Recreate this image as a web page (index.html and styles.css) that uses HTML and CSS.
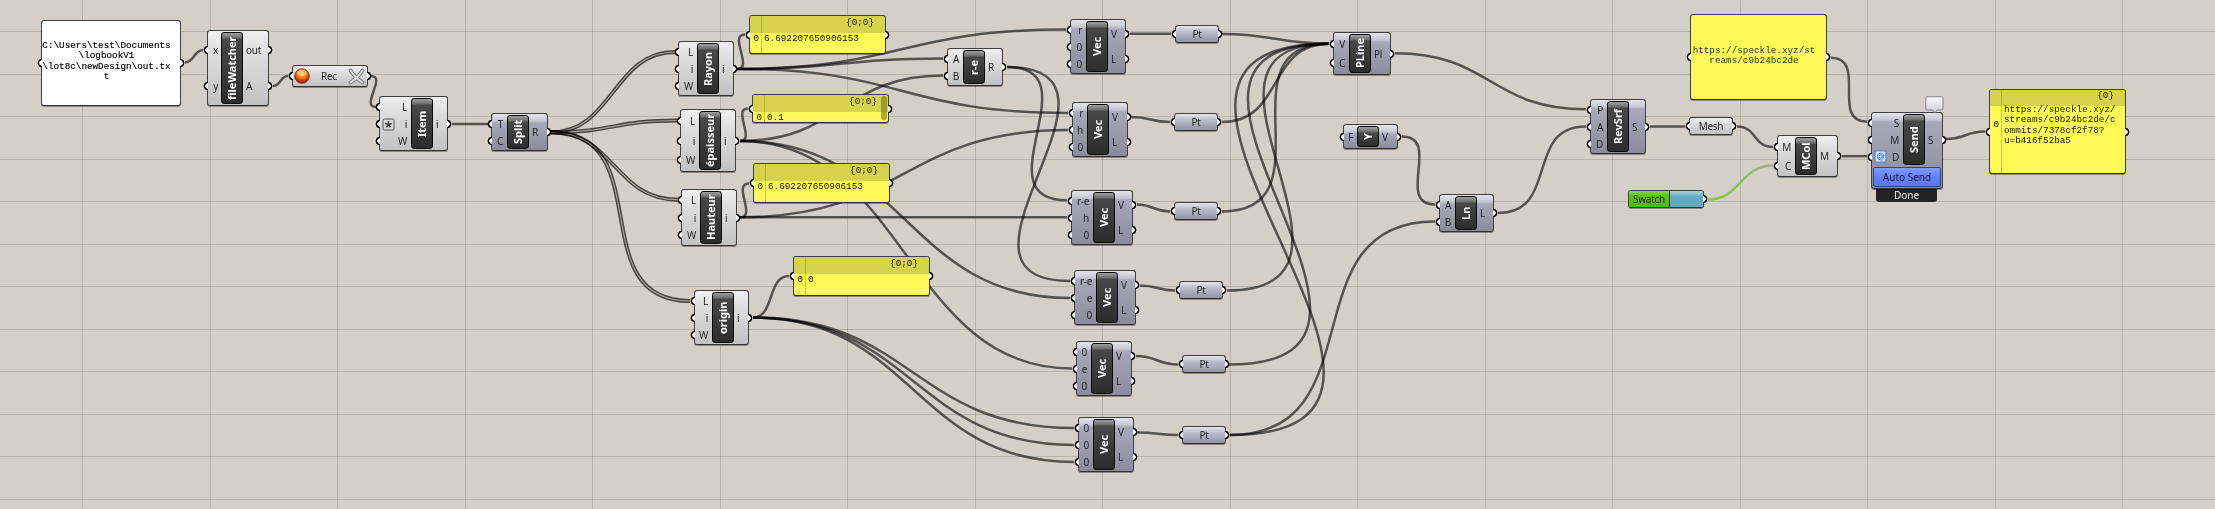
FILE: index.html
```html
<!DOCTYPE html>
<html lang="en">
<head>
<meta charset="utf-8">
<title>Definition canvas</title>
<link rel="stylesheet" href="styles.css">
</head>
<body>
<main class="canvas">
<svg class="wires" width="2215" height="509" viewBox="0 0 2215 509">
  <defs>
    <linearGradient id="green" x1="1708" x2="1773" y1="0" y2="0" gradientUnits="userSpaceOnUse">
      <stop offset="0" stop-color="#7fcb35"/><stop offset=".5" stop-color="#8cc255"/><stop offset="1" stop-color="#a3ad97"/>
    </linearGradient>
  </defs>
  <g class="grid">
    <path d="M82.5 0V509M210.5 0V509M337.5 0V509M465.5 0V509M592.5 0V509M720.5 0V509M847.5 0V509M975.5 0V509M1102.5 0V509M1230.5 0V509M1357.5 0V509M1485.5 0V509M1612.5 0V509M1740.5 0V509M1867.5 0V509M1995.5 0V509M2122.5 0V509"/>
    <path d="M0 31.5H2215M0 74.5H2215M0 116.5H2215M0 159.5H2215M0 201.5H2215M0 244.5H2215M0 286.5H2215M0 329.5H2215M0 371.5H2215M0 414.5H2215M0 456.5H2215M0 499.5H2215"/>
  </g>
  <g class="wire">
    <path d="M185 62.5C194 62.5 194 50 203 50"/>
    <path d="M273 86C281 86 280 76 288 76"/>
    <path d="M371 76C387 76 360 107 376 107"/>
    <path d="M452 124H488"/>
    <path d="M737 69C754 69 728 34.500 745 34.500"/>
    <path d="M737 69C901 69 902 29.500 1066 29.500"/>
    <path d="M737 69C840 69 840 58.500 943 58.500"/>
    <path d="M737 69C902 69 903 113 1068 113"/>
    <path d="M740 141C756 141 732 108.500 748 108.500"/>
    <path d="M740 141C841 141 842 75.500 943 75.500"/>
    <path d="M740 141C905 141 905 298 1070 298"/>
    <path d="M740 141C906 141 906 368.500 1072 368.500"/>
    <path d="M740 217.300C757 217.300 732 183.500 749 183.500"/>
    <path d="M740 217.300H1067"/>
    <path d="M740 217.300C904 217.300 904 130 1068 130"/>
    <path d="M753 317.500C775 317.500 767 276 789 276"/>
    <path d="M753 317.500C913 317.500 914 428 1074 428"/>
    <path d="M753 317.500C913 317.500 914 445 1074 445"/>
    <path d="M753 317.500C913 317.500 914 462 1074 462"/>
    <path d="M1007 67C1095 67 979 200.300 1067 200.300"/>
    <path d="M1007 67C1155 67 922 281 1070 281"/>
    <path d="M1130 33.700H1171"/>
    <path d="M1131 117C1151 117 1150 122 1170 122"/>
    <path d="M1137 204.500C1153 204.500 1154 211.500 1170 211.500"/>
    <path d="M1140 285.500C1157 285.500 1158 290.500 1175 290.500"/>
    <path d="M1136 356C1157 356 1157 364.500 1178 364.500"/>
    <path d="M1137 432.500C1158 432.500 1158 435 1178 435"/>
    <path d="M1222 34C1275 34 1276 43.700 1329 43.700"/>
    <path d="M1222 122C1284 122 1267 43.700 1329 43.700"/>
    <path d="M1222 211.500C1333 211.500 1218 43.700 1329 43.700"/>
    <path d="M1227 290.500C1399 290.500 1157 43.700 1329 43.700"/>
    <path d="M1229 364.500C1461 364.500 1097 43.700 1329 43.700"/>
    <path d="M1230 435C1508 435 1051 43.700 1329 43.700"/>
    <path d="M1230 435C1378 435 1287 221.500 1435 221.500"/>
    <path d="M1395 53.200C1491 53.200 1490 109.300 1586 109.300"/>
    <path d="M1402 136.500C1442 136.500 1395 204.500 1435 204.500"/>
    <path d="M1498 213C1560 213 1524 126.500 1586 126.500"/>
    <path d="M1650 126.500H1685"/>
    <path d="M1737 126.500C1757 126.500 1753 147 1773 147"/>
    <path d="M1842 156.200H1867"/>
    <path d="M1831 57.700C1868 57.700 1830 121.700 1867 121.700"/>
    <path d="M1946 139C1966 139 1965 131.500 1985 131.500"/>
    <path class="wire-green" d="M1708 199.500C1741 199.500 1740 165.500 1773 165.500"/>
  </g>
  <g class="wire-list">
    <g><path d="M551 132.300C613 132.300 613 52 675 52"/><path class="core" d="M551 132.300C613 132.300 613 52 675 52"/></g>
    <g><path d="M551 132.300C614 132.300 614 120.500 677 120.500"/><path class="core" d="M551 132.300C614 132.300 614 120.500 677 120.500"/></g>
    <g><path d="M551 132.300C615 132.300 614 199.700 678 199.700"/><path class="core" d="M551 132.300C615 132.300 614 199.700 678 199.700"/></g>
    <g><path d="M551 132.300C660 132.300 581 301 690 301"/><path class="core" d="M551 132.300C660 132.300 581 301 690 301"/></g>
  </g>
</svg>

<section class="panel white centered" id="path-panel"><i class="grip l"></i><i class="grip r"></i><p>C:\Users\test\Documents<br>\logbookV1<br>\lot8c\newDesign\out.tx<br>t</p></section>

<section class="node" id="watcher">
  <div class="ins"><span>x</span><span>y</span></div><b>fileWatcher</b><div class="outs"><span>out</span><span>A</span></div>
</section>

<section class="pill" id="rec"><i class="grip l"></i><i class="grip r"></i>
  <svg width="16" height="16" viewBox="0 0 16 16"><defs><radialGradient id="ball" cx=".5" cy=".3" r=".7"><stop offset="0" stop-color="#ffcf58"/><stop offset=".45" stop-color="#ec8620"/><stop offset=".8" stop-color="#c03408"/><stop offset="1" stop-color="#8c1400"/></radialGradient></defs><circle cx="8" cy="8" r="7.300" fill="url(#ball)" stroke="#8d1c0a" stroke-width=".8"/><ellipse cx="8" cy="5" rx="5" ry="3" fill="#fff" opacity=".25"/></svg>
  <span>Rec</span>
  <svg width="17" height="17" viewBox="0 0 17 17" fill="none" stroke-linecap="round"><path d="M2.500 2.500Q7 9.500 14.500 14.500M14.500 2.500Q10 9.500 2.500 14.500" stroke="#777" stroke-width="3.800"/><path d="M2.500 2.500Q7 9.500 14.500 14.500M14.500 2.500Q10 9.500 2.500 14.500" stroke="#dedede" stroke-width="2"/></svg>
</section>

<section class="node" id="item">
  <div class="ins"><span>L</span><span>i</span><span>W</span></div><b>Item</b><div class="outs"><span>i</span></div>
  <svg class="badge" width="13" height="13" viewBox="0 0 13 13" fill="none"><rect x="1" y="1" width="11" height="11" rx="1.500" fill="#d9d9d9" stroke="#555"/><path d="M6.500 6.500V3M6.500 6.500L3.200 5.500M6.500 6.500L9.800 5.500M6.500 6.500L4.500 9.400M6.500 6.500L8.500 9.400" stroke="#444" stroke-width="1.500"/></svg>
</section>
<section class="node violet" id="split"><div class="ins"><span>T</span><span>C</span></div><b>Split</b><div class="outs"><span>R</span></div></section>

<section class="node" id="rayon"><div class="ins"><span>L</span><span>i</span><span>W</span></div><b>Rayon</b><div class="outs"><span>i</span></div></section>
<section class="node" id="epaisseur"><div class="ins"><span>L</span><span>i</span><span>W</span></div><b>épaisseur</b><div class="outs"><span>i</span></div></section>
<section class="node" id="hauteur"><div class="ins"><span>L</span><span>i</span><span>W</span></div><b>Hauteur</b><div class="outs"><span>i</span></div></section>
<section class="node" id="origin"><div class="ins"><span>L</span><span>i</span><span>W</span></div><b>origin</b><div class="outs"><span>i</span></div></section>

<section class="panel" id="rayon-panel"><i class="grip l"></i><i class="grip r"></i><header>{0;0}</header><div class="row"><span>0</span><p>6.692207650906153</p></div></section>
<section class="panel" id="epaisseur-panel"><i class="grip l"></i><i class="grip r"></i><header>{0;0}</header><div class="row"><span>0</span><p>0.1</p></div><i class="scroll"></i></section>
<section class="panel" id="hauteur-panel"><i class="grip l"></i><i class="grip r"></i><header>{0;0}</header><div class="row"><span>0</span><p>6.692207650906153</p></div></section>
<section class="panel" id="origin-panel"><i class="grip l"></i><i class="grip r"></i><header>{0;0}</header><div class="row"><span>0</span><p>0</p></div></section>

<section class="node" id="minus"><div class="ins"><span>A</span><span>B</span></div><b>r-e</b><div class="outs"><span>R</span></div></section>

<section class="node violet" id="vec1"><div class="ins"><span>r</span><span>0</span><span>0</span></div><b>Vec</b><div class="outs"><span>V</span><span>L</span></div></section>
<section class="node violet" id="vec2"><div class="ins"><span>r</span><span>h</span><span>0</span></div><b>Vec</b><div class="outs"><span>V</span><span>L</span></div></section>
<section class="node violet" id="vec3"><div class="ins"><span>r-e</span><span>h</span><span>0</span></div><b>Vec</b><div class="outs"><span>V</span><span>L</span></div></section>
<section class="node violet" id="vec4"><div class="ins"><span>r-e</span><span>e</span><span>0</span></div><b>Vec</b><div class="outs"><span>V</span><span>L</span></div></section>
<section class="node violet" id="vec5"><div class="ins"><span>0</span><span>e</span><span>0</span></div><b>Vec</b><div class="outs"><span>V</span><span>L</span></div></section>
<section class="node violet" id="vec6"><div class="ins"><span>0</span><span>0</span><span>0</span></div><b>Vec</b><div class="outs"><span>V</span><span>L</span></div></section>

<section class="pill violet" id="pt1"><i class="grip l"></i><i class="grip r"></i><span>Pt</span></section>
<section class="pill violet" id="pt2"><i class="grip l"></i><i class="grip r"></i><span>Pt</span></section>
<section class="pill violet" id="pt3"><i class="grip l"></i><i class="grip r"></i><span>Pt</span></section>
<section class="pill violet" id="pt4"><i class="grip l"></i><i class="grip r"></i><span>Pt</span></section>
<section class="pill violet" id="pt5"><i class="grip l"></i><i class="grip r"></i><span>Pt</span></section>
<section class="pill violet" id="pt6"><i class="grip l"></i><i class="grip r"></i><span>Pt</span></section>

<section class="node violet" id="pline"><div class="ins"><span>V</span><span>C</span></div><b>PLine</b><div class="outs"><span>Pl</span></div></section>
<section class="node violet" id="unit-y"><div class="ins"><span>F</span></div><b>Y</b><div class="outs"><span>V</span></div></section>
<section class="node violet" id="line"><div class="ins"><span>A</span><span>B</span></div><b>Ln</b><div class="outs"><span>L</span></div></section>
<section class="node violet" id="revsrf"><div class="ins"><span>P</span><span>A</span><span>D</span></div><b>RevSrf</b><div class="outs"><span>S</span></div></section>
<section class="pill" id="mesh"><i class="grip l"></i><i class="grip r"></i><span>Mesh</span></section>
<section class="pill" id="swatch"><i class="grip r"></i><span class="name">Swatch</span><span class="color"></span></section>
<section class="node" id="mcol"><div class="ins"><span>M</span><span>C</span></div><b>MCol</b><div class="outs"><span>M</span></div></section>

<section class="panel centered" id="url-panel"><i class="grip l"></i><i class="grip r"></i><p>https://speckle.xyz/st<br>reams/c9b24bc2de</p></section>

<div class="done">Done</div>
<section class="node violet" id="send">
  <div class="ins"><span>S</span><span>M</span><span>D</span></div><b>Send</b><div class="outs"><span>S</span></div>
  <div class="button">Auto Send</div>
  <svg class="badge" width="13" height="13" viewBox="0 0 13 13" fill="none"><rect x="1" y="1" width="11" height="11" rx="1" fill="#d5e6fb" stroke="#3f86e8" stroke-width="1.200"/><path d="M8.200 4.500V7.500Q8.200 8.700 9.200 8.200Q10.200 7 9.600 5Q8.800 3 6.500 3Q3.300 3.300 3.300 6.500Q3.500 10 7 10H8.500M8.200 6.500A1.600 1.800 0 1 1 8.100 5.800" stroke="#3f86e8"/></svg>
  <svg class="bubble" width="19" height="18" viewBox="0 0 19 18"><defs><linearGradient id="bub" x2="0" y2="1"><stop offset="0" stop-color="#fafafc"/><stop offset="1" stop-color="#c9cbd8"/></linearGradient></defs><path d="M2 .8H16.500Q18 .8 18 2.300V12.500Q18 14 16.500 14H12L9.700 16.800L7.500 14H2Q.8 14 .8 12.500V2.300Q.8 .8 2 .8Z" fill="url(#bub)" stroke="#80828c"/></svg>
</section>

<section class="panel" id="commit-panel"><i class="grip l"></i><i class="grip r"></i><header>{0}</header><div class="row"><span>0</span><p>https://speckle.xyz/<br>streams/c9b24bc2de/c<br>ommits/7378cf2f78?<br>u=b416f52ba5</p></div></section>
</main>
</body>
</html>
```
FILE: styles.css
```css
* { box-sizing: border-box; }
body { margin: 0; background: #d4cfc7; }
.canvas {
  position: relative;
  width: 2215px;
  height: 509px;
  overflow: hidden;
  font: 10px/12px "Noto Sans", "Open Sans", sans-serif;
  color: #262626;
}
.wires { display: block; }
.grid { stroke: rgba(60, 75, 60, .2); stroke-width: 1; }
.wire { fill: none; stroke: rgba(0, 0, 0, .6); stroke-width: 2.5; }
.wire-green { stroke: url(#green); }
.wire-list { fill: none; stroke: #55534f; stroke-width: 4; }
.wire-list g { mix-blend-mode: multiply; }
.wire-list .core { stroke: #cbc7bf; stroke-width: 1.2; }

/* components */
.node, .pill, .panel {
  position: absolute;
  border: 1px solid #3f3f42;
  border-bottom-color: #333;
  border-radius: 3px;
  background: linear-gradient(#f0f0f0, #dedede 30%, #c2c2c2);
  box-shadow: 0 1px 0 rgba(0, 0, 0, .35);
}
.node {
  --in: 15px;
  --h: 55px;
  width: 56px;
  height: var(--h);
  display: grid;
  grid-template-columns: var(--in) 22px 1fr;
  grid-template-rows: 1fr;
}
.violet { background: linear-gradient(#e6e6ee, #c6c5d2 7px, #a9a8ba 9px, #8c8b9c); }
.ins, .outs { display: flex; flex-direction: column; padding: 1px 0; }
.ins span, .outs span {
  position: relative;
  flex: 1;
  display: flex;
  align-items: center;
  letter-spacing: -.3px;
}
.ins span { justify-content: flex-end; padding-right: 4px; }
.outs span { padding-left: 3px; }

/* half-round connection grips on the outer edges */
.ins span::before, .outs span::after, .grip {
  --side: 100%;
  content: "";
  position: absolute;
  top: calc(50% - 5px);
  width: 5px;
  height: 10px;
  background: radial-gradient(circle at var(--side) 50%, #fff 2.4px, #000 3.1px 4px, transparent 4.7px);
}
.ins span::before, .grip.l { left: -5px; }
.outs span::after, .grip.r { --side: 0%; right: -5px; }
.node > b {
  margin: 1px 0;
  display: flex;
  align-items: center;
  justify-content: center;
  writing-mode: vertical-rl;
  transform: rotate(180deg);
  font-size: 11px;
  line-height: 18px;
  color: #fff;
  border: 1px solid #0a0a0a;
  border-radius: 3px;
  background: linear-gradient(to top, #a0a0a0, #6a6a6a 5px, #484848 6px, #2c2c2c);
  white-space: nowrap;
  overflow: hidden;
}
.pill {
  width: 44px;
  height: 18px;
  display: flex;
  align-items: center;
  justify-content: center;
  letter-spacing: -.3px;
}
.pill.violet { background: linear-gradient(#e4e4ec, #bcbbca 6px, #9392a4); }
.badge { position: absolute; top: 21px; left: 2px; }

#watcher { left: 207px; top: 30px; width: 62px; --h: 76px; --in: 13px; }
#watcher .ins span { padding-right: 3px; }
#item { left: 379px; top: 96px; width: 69px; --in: 31px; }
#split { left: 491px; top: 113px; width: 57px; --h: 38px; }
#rayon { left: 678px; top: 41px; --in: 18px; }
#epaisseur { left: 680px; top: 109px; --h: 63px; --in: 18px; }
#hauteur { left: 681px; top: 189px; --h: 57px; --in: 18px; }
#origin { left: 694px; top: 290px; width: 55px; --in: 17px; }
#minus { left: 947px; top: 48px; --h: 38px; }
#vec1 { left: 1070px; top: 19px; }
#vec2 { left: 1072px; top: 102px; --in: 14px; }
#vec3 { left: 1071px; top: 190px; width: 62px; --in: 21px; }
#vec4 { left: 1074px; top: 270px; width: 62px; --in: 21px; }
#vec5 { left: 1076px; top: 341px; --in: 14px; }
#vec6 { left: 1078px; top: 417px; --in: 14px; }
#pline { left: 1333px; top: 32px; width: 58px; --h: 43px; }
#unit-y { left: 1343px; top: 124px; width: 55px; --h: 25px; --in: 13px; }
#line { left: 1439px; top: 194px; width: 55px; --h: 38px; }
#revsrf { left: 1590px; top: 99px; --in: 16px; }
#mcol { left: 1777px; top: 135px; width: 61px; --h: 42px; --in: 17px; }
#send { left: 1871px; top: 112px; width: 72px; --h: 77px; --in: 31px; grid-template-rows: 53px 1fr; }
#send .badge { top: 37px; }

#rec { left: 292px; top: 65px; width: 76px; height: 22px; justify-content: space-between; padding: 0 2px 0 1px; }
#pt1 { left: 1175px; top: 25px; }
#pt2 { left: 1174px; top: 113px; }
#pt3 { left: 1174px; top: 202px; }
#pt4 { left: 1179px; top: 281px; }
#pt5 { left: 1182px; top: 355px; }
#pt6 { left: 1182px; top: 426px; }
#mesh { left: 1689px; top: 117px; }
#swatch { left: 1628px; top: 190px; width: 76px; align-items: stretch; }
#swatch .name {
  width: 41px;
  display: grid;
  place-items: center;
  border-right: 1px solid #333;
  border-radius: 2px 0 0 2px;
  background: linear-gradient(#83d653, #5cc41c 5px, #4fb80f);
  color: #12300a;
}
#swatch .color { flex: 1; border-radius: 0 2px 2px 0; background: linear-gradient(#a8d3e0, #64a9c0 6px); }

.button {
  grid-column: 1 / -1;
  margin: 1px;
  display: grid;
  place-items: center;
  border: 1px solid #1c4a92;
  border-radius: 2px;
  background: linear-gradient(#809bff, #6480f4 50%, #5c78f0);
  color: #141c3c;
}
.bubble { position: absolute; top: -17px; right: -2px; }
.done {
  position: absolute;
  left: 1876px;
  top: 187px;
  width: 61px;
  height: 15px;
  padding-top: 2px;
  border-radius: 0 0 3px 3px;
  background: #232323;
  color: #eee;
  text-align: center;
}

/* text panels */
.panel {
  width: 137px;
  background: #fff957;
  font: 9.3px/10.3px "Liberation Mono", monospace;
  color: #1c1c00;
}
.panel p { margin: 0; }
.white { background: #fff; color: #000; }
.centered { display: flex; align-items: center; justify-content: center; padding-right: 9px; text-align: center; }
.panel header {
  height: 17px;
  padding: 2px 11px 0 0;
  text-align: right;
  background: #d6d24c;
  border-radius: 2px 2px 0 0;
}
.panel .row { display: flex; height: calc(100% - 17px); }
.panel .row span {
  width: 12px;
  margin-top: -17px;
  padding: 18px 2px 0 0;
  text-align: right;
  border-right: 1px solid rgba(90, 85, 0, .3);
}
.panel .row p { padding: 1px 0 0 2px; }
.scroll { position: absolute; right: 1px; top: 1px; width: 6px; height: 24px; border-radius: 3px; background: rgba(110, 106, 20, .55); }

#path-panel { left: 41px; top: 20px; width: 140px; height: 86px; -webkit-text-stroke: .15px #000; }
#path-panel p { padding-bottom: 3px; }
#rayon-panel { left: 749px; top: 15px; height: 39px; }
#epaisseur-panel { left: 752px; top: 94px; height: 29px; }
#hauteur-panel { left: 753px; top: 163px; height: 40px; }
#origin-panel { left: 793px; top: 256px; height: 40px; }
#url-panel { left: 1690px; top: 14px; height: 86px; color: #123c00; }
#url-panel p { padding-bottom: 2px; }
#commit-panel { left: 1989px; top: 89px; height: 85px; }
#commit-panel header { height: 16px; padding-top: 1px; }
#commit-panel .row { height: calc(100% - 16px); }
#commit-panel .row span { margin-top: -16px; padding-top: 30px; }
#commit-panel .row p { margin-top: -1px; padding-top: 0; }
```
